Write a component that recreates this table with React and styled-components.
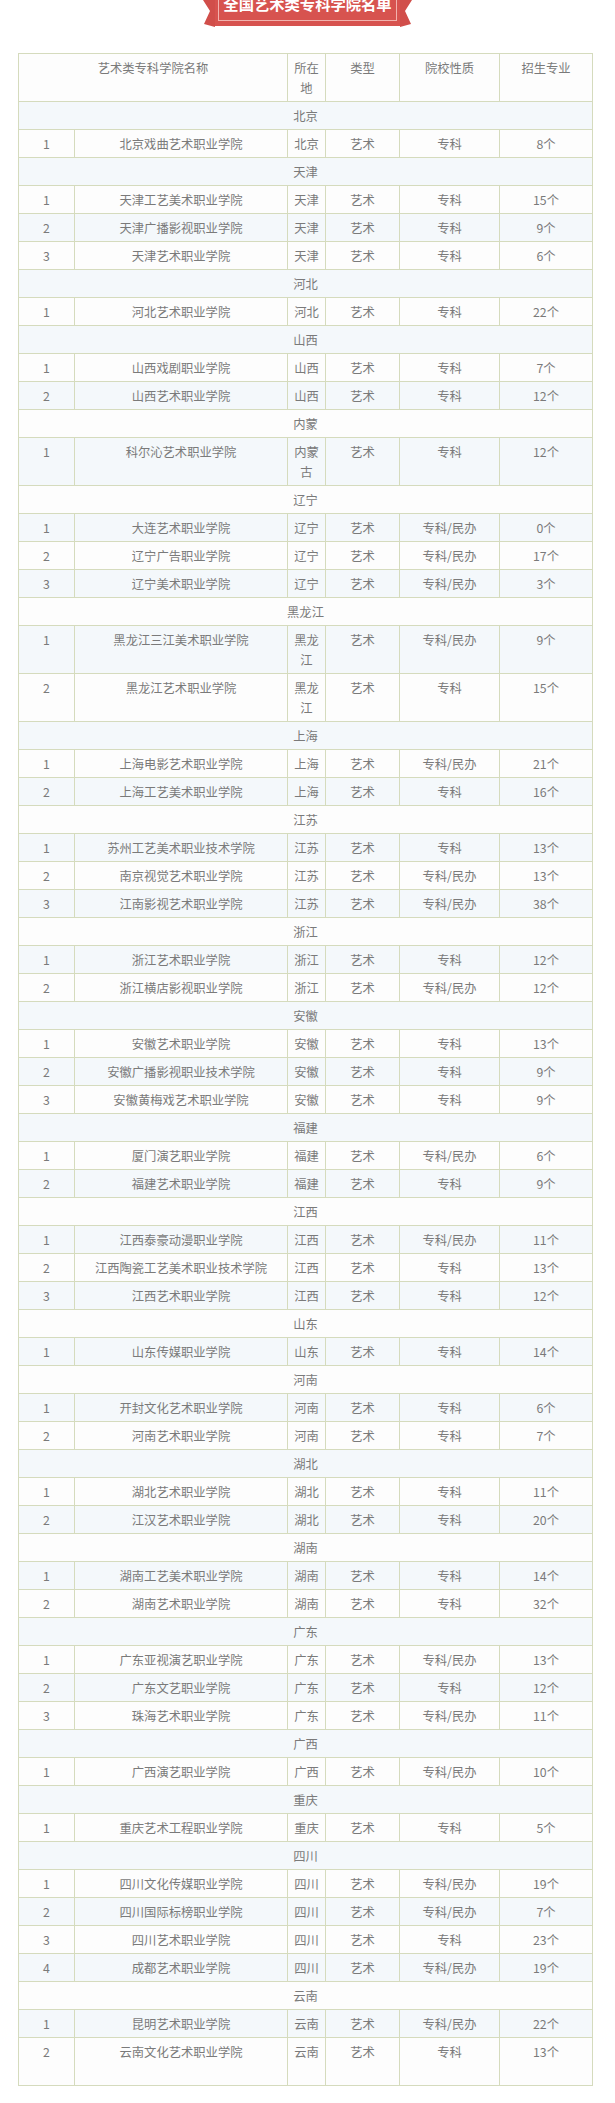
import React from "react";
import styled, { createGlobalStyle } from "styled-components";

const Global = createGlobalStyle`
  html, body { margin: 0; padding: 0; background: #ffffff; }
  body { font-family: "Noto Sans CJK SC", "Microsoft YaHei", sans-serif; }
`;

const Page = styled.div`
  width: 615px;
  overflow: hidden;
  padding-bottom: 14px;
`;

const BannerWrap = styled.div`
  display: flex;
  justify-content: center;
  align-items: flex-start;
  height: 53px;
`;

const Tail = styled.svg`
  display: block;
  width: 12px;
  height: 28px;
  flex: none;
`;

const BannerBody = styled.div`
  position: relative;
  width: 185px;
  height: 38px;
  margin-top: -12px;
  background: #d7534f;
  box-sizing: border-box;
  padding-top: 6px;
  text-align: center;
  color: #ffffff;
  font-weight: 700;
  font-size: 15.3px;
  line-height: 18px;
  letter-spacing: 0;
  &::after {
    content: "";
    position: absolute;
    left: 3px;
    right: 3px;
    top: 0;
    bottom: 5px;
    border: 1.5px solid #f2b3ae;
    pointer-events: none;
  }
`;

const TableWrap = styled.div`
  padding-left: 18px;
`;

const Table = styled.table`
  width: 574px;
  table-layout: fixed;
  border-collapse: collapse;
  font-size: 12.3px;
  line-height: 20px;
  color: #7a7a7a;
  border: 1px solid #d5dbbd;
`;

const Row = styled.tr`
  background: ${(p) => (p.$stripe ? "#f4f8fb" : "#fdfdfd")};
`;

const Cell = styled.td`
  border: 1px solid #d5dbbd;
  padding: 4px 5px 3px;
  text-align: center;
  vertical-align: top;
  word-break: break-all;
`;

const HeadCell = styled(Cell).attrs({ as: "th" })`
  font-weight: 400;
`;

const Blank = styled.span`
  display: block;
  height: 20px;
`;

const data = [
  ["北京", [["北京戏曲艺术职业学院", "北京", "专科", "8个"]]],
  [
    "天津",
    [
      ["天津工艺美术职业学院", "天津", "专科", "15个"],
      ["天津广播影视职业学院", "天津", "专科", "9个"],
      ["天津艺术职业学院", "天津", "专科", "6个"],
    ],
  ],
  ["河北", [["河北艺术职业学院", "河北", "专科", "22个"]]],
  [
    "山西",
    [
      ["山西戏剧职业学院", "山西", "专科", "7个"],
      ["山西艺术职业学院", "山西", "专科", "12个"],
    ],
  ],
  ["内蒙", [["科尔沁艺术职业学院", "内蒙古", "专科", "12个"]]],
  [
    "辽宁",
    [
      ["大连艺术职业学院", "辽宁", "专科/民办", "0个"],
      ["辽宁广告职业学院", "辽宁", "专科/民办", "17个"],
      ["辽宁美术职业学院", "辽宁", "专科/民办", "3个"],
    ],
  ],
  [
    "黑龙江",
    [
      ["黑龙江三江美术职业学院", "黑龙江", "专科/民办", "9个"],
      ["黑龙江艺术职业学院", "黑龙江", "专科", "15个"],
    ],
  ],
  [
    "上海",
    [
      ["上海电影艺术职业学院", "上海", "专科/民办", "21个"],
      ["上海工艺美术职业学院", "上海", "专科", "16个"],
    ],
  ],
  [
    "江苏",
    [
      ["苏州工艺美术职业技术学院", "江苏", "专科", "13个"],
      ["南京视觉艺术职业学院", "江苏", "专科/民办", "13个"],
      ["江南影视艺术职业学院", "江苏", "专科/民办", "38个"],
    ],
  ],
  [
    "浙江",
    [
      ["浙江艺术职业学院", "浙江", "专科", "12个"],
      ["浙江横店影视职业学院", "浙江", "专科/民办", "12个"],
    ],
  ],
  [
    "安徽",
    [
      ["安徽艺术职业学院", "安徽", "专科", "13个"],
      ["安徽广播影视职业技术学院", "安徽", "专科", "9个"],
      ["安徽黄梅戏艺术职业学院", "安徽", "专科", "9个"],
    ],
  ],
  [
    "福建",
    [
      ["厦门演艺职业学院", "福建", "专科/民办", "6个"],
      ["福建艺术职业学院", "福建", "专科", "9个"],
    ],
  ],
  [
    "江西",
    [
      ["江西泰豪动漫职业学院", "江西", "专科/民办", "11个"],
      ["江西陶瓷工艺美术职业技术学院", "江西", "专科", "13个"],
      ["江西艺术职业学院", "江西", "专科", "12个"],
    ],
  ],
  ["山东", [["山东传媒职业学院", "山东", "专科", "14个"]]],
  [
    "河南",
    [
      ["开封文化艺术职业学院", "河南", "专科", "6个"],
      ["河南艺术职业学院", "河南", "专科", "7个"],
    ],
  ],
  [
    "湖北",
    [
      ["湖北艺术职业学院", "湖北", "专科", "11个"],
      ["江汉艺术职业学院", "湖北", "专科", "20个"],
    ],
  ],
  [
    "湖南",
    [
      ["湖南工艺美术职业学院", "湖南", "专科", "14个"],
      ["湖南艺术职业学院", "湖南", "专科", "32个"],
    ],
  ],
  [
    "广东",
    [
      ["广东亚视演艺职业学院", "广东", "专科/民办", "13个"],
      ["广东文艺职业学院", "广东", "专科", "12个"],
      ["珠海艺术职业学院", "广东", "专科/民办", "11个"],
    ],
  ],
  ["广西", [["广西演艺职业学院", "广西", "专科/民办", "10个"]]],
  ["重庆", [["重庆艺术工程职业学院", "重庆", "专科", "5个"]]],
  [
    "四川",
    [
      ["四川文化传媒职业学院", "四川", "专科/民办", "19个"],
      ["四川国际标榜职业学院", "四川", "专科/民办", "7个"],
      ["四川艺术职业学院", "四川", "专科", "23个"],
      ["成都艺术职业学院", "四川", "专科/民办", "19个"],
    ],
  ],
  [
    "云南",
    [
      ["昆明艺术职业学院", "云南", "专科/民办", "22个"],
      ["云南文化艺术职业学院", "云南", "专科", "13个", true],
    ],
  ],
];

function buildRows() {
  const rows = [];
  let idx = 0;
  data.forEach(([region, schools]) => {
    rows.push(
      <Row key={`r-${region}`} $stripe={idx % 2 === 0}>
        <Cell colSpan={6}>{region}</Cell>
      </Row>
    );
    idx += 1;
    schools.forEach(([name, loc, nature, count, extra], i) => {
      rows.push(
        <Row key={`${region}-${i}`} $stripe={idx % 2 === 0}>
          <Cell>{i + 1}</Cell>
          <Cell>
            {name}
            {extra && <Blank />}
          </Cell>
          <Cell>{loc}</Cell>
          <Cell>艺术</Cell>
          <Cell>{nature}</Cell>
          <Cell>{count}</Cell>
        </Row>
      );
      idx += 1;
    });
  });
  return rows;
}

export default function App() {
  return (
    <Page>
      <Global />
      <BannerWrap>
        <Tail viewBox="0 0 12 28">
          <polygon points="0,0 12,0 12,27 1,24 7,11" fill="#d14e4a" />
        </Tail>
        <BannerBody>全国艺术类专科学院名单</BannerBody>
        <Tail viewBox="0 0 12 28">
          <polygon points="12,0 0,0 0,27 11,24 5,11" fill="#d14e4a" />
        </Tail>
      </BannerWrap>
      <TableWrap>
        <Table>
          <colgroup>
            <col style={{ width: "56px" }} />
            <col style={{ width: "213px" }} />
            <col style={{ width: "38px" }} />
            <col style={{ width: "74px" }} />
            <col style={{ width: "100px" }} />
            <col style={{ width: "93px" }} />
          </colgroup>
          <tbody>
            <Row $stripe={false}>
              <HeadCell colSpan={2}>艺术类专科学院名称</HeadCell>
              <HeadCell>所在地</HeadCell>
              <HeadCell>类型</HeadCell>
              <HeadCell>院校性质</HeadCell>
              <HeadCell>招生专业</HeadCell>
            </Row>
            {buildRows()}
          </tbody>
        </Table>
      </TableWrap>
    </Page>
  );
}
